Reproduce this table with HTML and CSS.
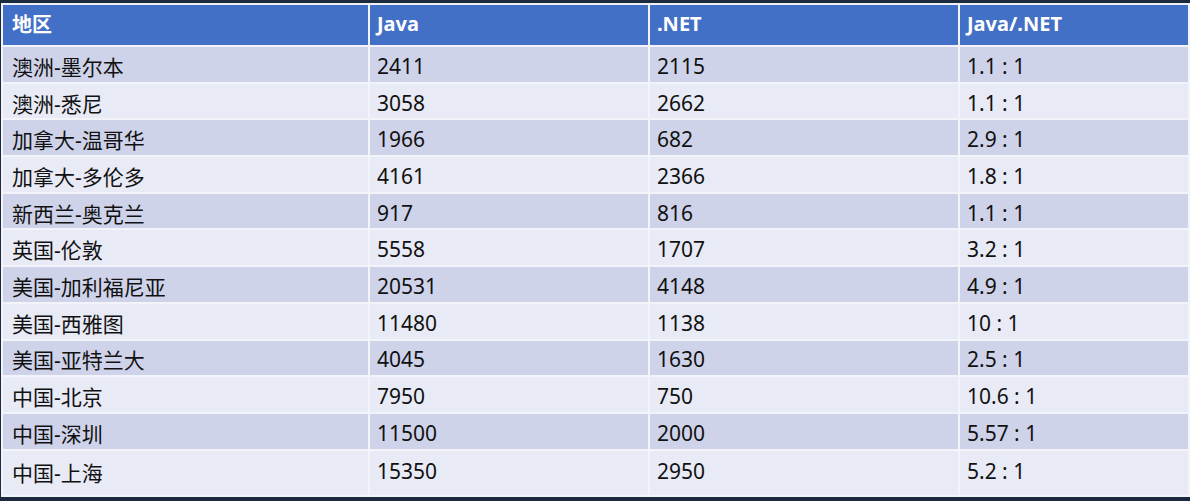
FILE: index.html
```html
<!DOCTYPE html>
<html lang="zh">
<head>
<meta charset="utf-8">
<link rel="stylesheet" href="styles.css">
</head>
<body>
<div class="frame">
<table class="data">
<colgroup><col class="c1"><col class="c2"><col class="c3"><col class="c4"></colgroup>
<thead>
<tr><th>地区</th><th>Java</th><th>.NET</th><th>Java/.NET</th></tr>
</thead>
<tbody>
<tr><td>澳洲-墨尔本</td><td>2411</td><td>2115</td><td>1.1 : 1</td></tr>
<tr><td>澳洲-悉尼</td><td>3058</td><td>2662</td><td>1.1 : 1</td></tr>
<tr><td>加拿大-温哥华</td><td>1966</td><td>682</td><td>2.9 : 1</td></tr>
<tr><td>加拿大-多伦多</td><td>4161</td><td>2366</td><td>1.8 : 1</td></tr>
<tr><td>新西兰-奥克兰</td><td>917</td><td>816</td><td>1.1 : 1</td></tr>
<tr><td>英国-伦敦</td><td>5558</td><td>1707</td><td>3.2 : 1</td></tr>
<tr><td>美国-加利福尼亚</td><td>20531</td><td>4148</td><td>4.9 : 1</td></tr>
<tr><td>美国-西雅图</td><td>11480</td><td>1138</td><td>10 : 1</td></tr>
<tr><td>美国-亚特兰大</td><td>4045</td><td>1630</td><td>2.5 : 1</td></tr>
<tr><td>中国-北京</td><td>7950</td><td>750</td><td>10.6 : 1</td></tr>
<tr><td>中国-深圳</td><td>11500</td><td>2000</td><td>5.57 : 1</td></tr>
<tr class="last"><td>中国-上海</td><td>15350</td><td>2950</td><td>5.2 : 1</td></tr>
</tbody>
</table>
</div>
</body>
</html>
```
FILE: styles.css
```css
html, body {
  margin: 0;
  padding: 0;
  background: #1c2a3e;
}
body {
  width: 1190px;
  height: 501px;
  overflow: hidden;
}
.frame {
  padding: 3px 2px 0 1px;
}
.data {
  border-collapse: collapse;
  table-layout: fixed;
  width: 1187px;
  font-family: "Noto Sans", "Noto Sans CJK SC", sans-serif;
  font-size: 21px;
  color: #111;
  border: 2px solid #eef1f8;
}
.c1 { width: 367px; }
.c2 { width: 280px; }
.c3 { width: 310px; }
.c4 { width: 230px; }
.data th, .data td {
  border: 2px solid #f2f4fa;
  padding: 0 0 0 7px;
  text-align: left;
  white-space: nowrap;
  box-sizing: border-box;
}
.data th {
  background: #4270c6;
  color: #fff;
  font-weight: bold;
  font-size: 20px;
  height: 42px;
  border-top: none;
  padding-bottom: 3px;
}
.data td {
  height: 36.7px;
  padding-top: 3px;
}
.data td:first-child, .data th:first-child { padding-left: 9px; }
.data tbody tr:nth-child(odd) td { background: #cfd3ea; }
.data tbody tr:nth-child(even) td { background: #e8eaf5; }
.data tr.last td {
  height: 46px;
  vertical-align: top;
  padding-top: 6px;
}
```
